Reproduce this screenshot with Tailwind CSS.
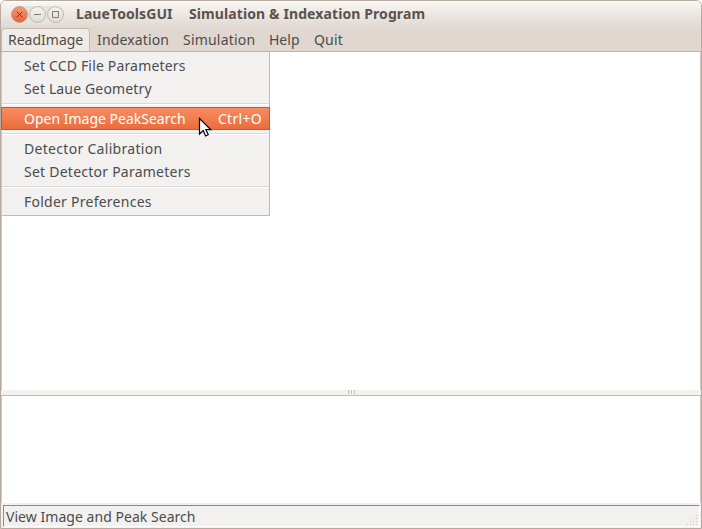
<!DOCTYPE html>
<html lang="en">
<head>
<meta charset="utf-8">
<title>LaueToolsGUI</title>
<script src="https://cdn.jsdelivr.net/npm/@tailwindcss/browser@4"></script>
</head>
<body class="w-[702px] h-[529px] overflow-hidden bg-white">
<div class="relative flex h-[529px] w-[702px] flex-col overflow-hidden rounded-t-[6px] border border-[#b5a9a0] bg-[#f2f1f0] font-['Noto_Sans','Open_Sans',sans-serif] text-[14px] whitespace-nowrap text-[#4c4c4c]">
  <header class="flex h-[27px] shrink-0 items-center border-t border-white bg-linear-to-b from-[#f8f6f3] to-[#dfd8d2] pb-[4px] pl-[10px]">
    <svg class="mt-[2px] mr-[10px] h-[20px] w-[55px] shrink-0" viewBox="0 0 55 20" fill="none">
      <defs>
        <linearGradient id="close" x1="0" y1="0" x2="0" y2="1"><stop offset="0" stop-color="#f59a78"/><stop offset="1" stop-color="#ea6338"/></linearGradient>
        <linearGradient id="plain" x1="0" y1="0" x2="0" y2="1"><stop offset="0" stop-color="#f5f3f1"/><stop offset="1" stop-color="#dfdad5"/></linearGradient>
      </defs>
      <rect x="0" y="2" width="54" height="18" rx="9" fill="#e7e2dd"/>
      <circle cx="8.5" cy="10.500" r="7.9" fill="url(#close)" stroke="#c0907c" stroke-width=".9"/>
      <circle cx="26.5" cy="10.500" r="7.9" fill="url(#plain)" stroke="#b9b3ad" stroke-width=".9"/>
      <circle cx="44.5" cy="10.500" r="7.9" fill="url(#plain)" stroke="#b9b3ad" stroke-width=".9"/>
      <path d="M5.800 7.800l5.400 5.400M11.200 7.800l-5.400 5.400" stroke="#703825"/>
      <path d="M23 10.5h7" stroke="#817a74"/>
      <path d="M41.500 7.500h6v6h-6z" stroke="#817a74"/>
    </svg>
    <h1 class="w-[113px] shrink-0 text-[14px] font-bold tracking-[0.08px] text-[#5b524c]">LaueToolsGUI</h1>
    <span class="font-bold tracking-[0.1px] text-[#5b524c]">Simulation &amp; Indexation Program</span>
  </header>
  <nav class="flex h-[24px] shrink-0 items-center border-b border-[#bdb3ab] bg-[#dfd7d0]">
    <div class="flex h-[23px] w-[89px] items-center rounded-t-[4px] border border-b-0 border-[#c4b8af] bg-[#f0ebe7] pb-px pl-[6px]">ReadImage</div>
    <div class="w-[86px] pl-[7px] tracking-[0.15px]">Indexation</div>
    <div class="w-[86px] pl-[7px] tracking-[0.2px]">Simulation</div>
    <div class="w-[45px] pl-[7px]">Help</div>
    <div class="pl-[7px] tracking-[0.15px]">Quit</div>
  </nav>
  <main class="h-[338px] shrink-0 border-x border-[#cfcac6] bg-white">
    <div class="flex h-[164px] w-[268px] flex-col border-r border-b border-[#bebbb8] bg-[#f2f1f0] pt-[2px]">
      <div class="flex h-[23px] items-center pl-[22px] tracking-[0.17px]">Set CCD File Parameters</div>
      <div class="flex h-[23px] items-center pl-[22px] tracking-[0.15px]">Set Laue Geometry</div>
      <div class="mt-[3px] h-[4px] border-t border-[#dcdad8]"><div class="h-px bg-white"></div></div>
      <div class="-mx-px flex h-[23px] items-center justify-between border border-[#cb562b] bg-linear-to-b from-[#f98c61] to-[#e96d3c] pr-[7px] pl-[22px] text-white"><span>Open Image PeakSearch</span><span class="tracking-[0.3px]">Ctrl+O</span></div>
      <div class="mt-[3px] h-[4px] border-t border-[#dcdad8]"><div class="h-px bg-white"></div></div>
      <div class="flex h-[23px] items-center pl-[22px] tracking-[0.3px]">Detector Calibration</div>
      <div class="flex h-[23px] items-center pl-[22px] tracking-[0.24px]">Set Detector Parameters</div>
      <div class="mt-[3px] h-[4px] border-t border-[#dcdad8]"><div class="h-px bg-white"></div></div>
      <div class="flex h-[23px] items-center pl-[22px] tracking-[0.25px]">Folder Preferences</div>
    </div>
  </main>
  <div class="flex h-[6px] shrink-0 justify-center gap-[2px] border-b border-[#bebbb8]">
    <i class="h-[4px] w-px bg-[#c2c0be]"></i><i class="h-[4px] w-px bg-[#c2c0be]"></i><i class="h-[4px] w-px bg-[#c2c0be]"></i>
  </div>
  <section class="h-[107px] shrink-0 border-x border-[#cfcac6] bg-white"></section>
  <footer class="flex h-[25px] shrink-0 py-[2px] pr-px pb-px pl-[2px]">
    <div class="flex grow items-center justify-between border border-t-[#8f8a86] border-r-white border-b-white border-l-[#8f8a86] pl-[2px]">
      <span class="tracking-[0.04px]">View Image and Peak Search</span>
      <svg class="h-[12px] w-[12px] self-end" viewBox="0 0 12 12" fill="#c9c7c4"><path d="M0 10h1v1H0zM3 10h1v1H3zM6 10h1v1H6zM9 10h1v1H9zM3 7h1v1H3zM6 7h1v1H6zM9 7h1v1H9zM6 4h1v1H6zM9 4h1v1H9zM9 1h1v1H9z"/></svg>
    </div>
  </footer>
  <svg class="absolute top-[116px] left-[197px] h-[22px] w-[14px]" viewBox="0 0 14 22"><path d="M1.500 1.500v15.500l3.700-3.500 2.400 5.500 2.600-1.200-2.300-5.100h4.900z" fill="white" stroke="black" stroke-width="1.2"/></svg>
</div>
</body>
</html>
